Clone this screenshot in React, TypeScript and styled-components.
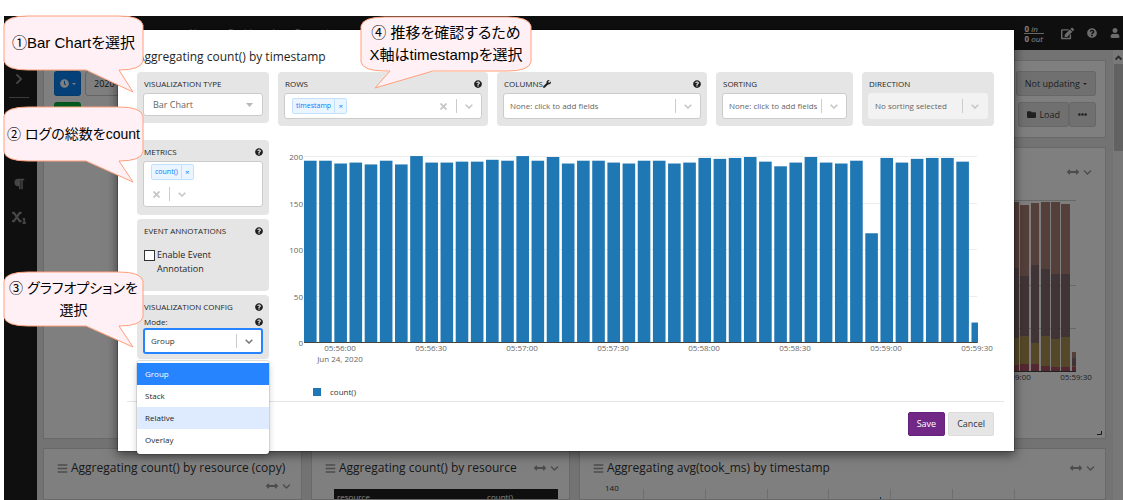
import React from "react";
import styled, { createGlobalStyle, css } from "styled-components";
import {
  FaArrowsAltH,
  FaBars,
  FaChevronDown,
  FaChevronRight,
  FaClock,
  FaEdit,
  FaEllipsisH,
  FaFolder,
  FaParagraph,
  FaPlay,
  FaQuestionCircle,
  FaSubscript,
  FaUser,
  FaWrench,
} from "react-icons/fa";

const Global = createGlobalStyle`
  * { box-sizing: border-box; }
  body {
    margin: 0;
    background: #fff;
    font-family: "Open Sans", "Noto Sans", sans-serif;
    font-size: 8px;
    line-height: 12px;
    color: #1f1f1f;
  }
  button, input, select { font: inherit; color: inherit; margin: 0; }
  button { cursor: pointer; }
  h2, h3 { margin: 0; font-weight: 400; }
  ul { margin: 0; padding: 0; list-style: none; }
  svg { flex: none; }
`;

/* ---------- application behind the dialog ---------- */

const Page = styled.div`
  position: relative;
  padding: 16px 0 0 4px;
`;

const Frame = styled.div`
  position: relative;
  display: flex;
  flex-direction: column;
  height: calc(100vh - 16px);
  overflow: hidden;
  background: #e6e6e6;
`;

const Navbar = styled.nav`
  display: flex;
  flex: none;
  align-items: center;
  height: 34px;
  padding: 0 3px 0 184px;
  background: #1f1f1f;
  color: #e0e0e0;
`;

const NavLinks = styled.div`
  display: flex;
  flex: 1;
  gap: 16px;
  font-size: 9px;
  a { color: inherit; text-decoration: none; }
`;

const NavTools = styled.div`
  display: flex;
  align-items: center;
  gap: 13px;
  color: #d8d8d8;
`;

const Throughput = styled.div`
  margin-right: 4px;
  font-size: 8px;
  line-height: 9px;
  color: #fff;
  span { display: block; padding: 0 1px; }
  span + span { border-top: 1px solid #d0d0d0; }
`;

const IconButton = styled.button`
  display: flex;
  align-items: center;
  padding: 0;
  border: 0;
  background: none;
  color: inherit;
`;

const Main = styled.div`
  display: flex;
  flex: 1;
  min-height: 0;
`;

const Sidebar = styled.aside`
  display: flex;
  flex: none;
  flex-direction: column;
  align-items: center;
  gap: 20px;
  width: 33px;
  padding: 23px 3px 0 0;
  background: #1f1f1f;
  color: #8c8c8c;
  hr { width: 20px; margin: -8px 0 60px; border: 0; border-top: 1px solid #777; }
`;

const Content = styled.main`
  display: flex;
  flex: 1;
  flex-direction: column;
  gap: 9px;
  min-width: 0;
  padding: 10px 7px 0 6px;
`;

const Card = styled.section`
  border: 1px solid #d2d2d2;
  background: #fff;
  min-width: 0;
`;

const SearchBar = styled(Card)`
  display: flex;
  flex: none;
  flex-direction: column;
  gap: 6px;
  padding: 10px 9px 10px 10px;
`;

const SearchRow = styled.div`
  display: flex;
  align-items: center;
  justify-content: space-between;
  height: 25px;
  font-size: 9px;
`;

const Cluster = styled.div<{ $gap?: number }>`
  display: flex;
  gap: ${(p) => p.$gap ?? 0}px;
`;

const ToolButton = styled.button<{ $bg: string; $fg?: string }>`
  display: flex;
  align-items: center;
  justify-content: center;
  gap: 3px;
  min-width: 27px;
  height: 25px;
  padding: 0 ${(p) => (p.$fg ? 4 : 8)}px;
  border: 1px solid rgba(0, 0, 0, 0.08);
  border-radius: 3px;
  background: ${(p) => p.$bg};
  color: ${(p) => p.$fg ?? "#404040"};
`;

const DateField = styled.input`
  width: 180px;
  height: 25px;
  padding: 0 8px;
  border: 1px solid #c8c8c8;
  border-radius: 3px;
  font-size: 9px;
`;

const Caret = styled.i`
  border: 2px solid transparent;
  border-top-color: currentColor;
  border-bottom: 0;
`;

const WideRow = styled.div`
  display: grid;
  flex: none;
  grid-template-columns: 1fr 1fr;
  gap: 9px;
`;

const WideCard = styled(Card)`
  display: flex;
  flex-direction: column;
  align-items: flex-end;
  height: 292px;
  padding: 18px 3px 3px 0;
  > :last-child { margin-top: auto; }
`;

const WidgetTools = styled.div<{ $inset?: number }>`
  display: flex;
  align-items: center;
  gap: 4px;
  padding-right: ${(p) => p.$inset ?? 10}px;
  color: #999;
`;

const WidgetRow = styled.div`
  display: grid;
  flex: 1;
  grid-template-columns: 259fr 259fr 527fr;
  gap: 9px;
  min-height: 0;
`;

const Widget = styled(Card)`
  padding-top: 10px;
  overflow: hidden;
`;

const WidgetHead = styled.header<{ $wrap?: boolean }>`
  display: flex;
  flex-wrap: ${(p) => (p.$wrap ? "wrap" : "nowrap")};
  align-items: center;
  gap: 3px;
  padding-left: 13px;
  color: #999;
  h3 {
    flex: ${(p) => (p.$wrap ? "1 0 80%" : "1")};
    font-size: 12px;
    line-height: 18px;
    color: #333;
    white-space: nowrap;
  }
  ${WidgetTools} { margin-left: auto; }
`;

const DataTable = styled.table`
  width: 224px;
  margin: 12px 0 0 22px;
  border-collapse: collapse;
  background: #1f1f1f;
  color: #fff;
  font-size: 8px;
  line-height: 9px;
  th { width: 67%; padding: 3px; font-weight: 400; text-align: left; }
`;

const Scrollbar = styled.div`
  flex: none;
  width: 10px;
  background: #f0f0f0;
  color: #505050;
  &::after { content: ""; display: block; height: 87px; margin-left: 1px; background: #c4c4c4; }
  svg { display: block; margin: 0 auto; }
`;

/* ---------- dialog ---------- */

const Overlay = styled.div`
  position: absolute;
  inset: 0;
  padding: 13px 108px 0 113px;
  background: rgba(0, 0, 0, 0.5);
`;

const Dialog = styled.div`
  display: flex;
  flex-direction: column;
  border: 1px solid rgba(0, 0, 0, 0.2);
  background: #fff;
  background-clip: padding-box;
  box-shadow: 0 3px 10px rgba(0, 0, 0, 0.5);
`;

const DialogBody = styled.div`
  padding: 18px 20px 0 19px;
  h2 { font-size: 12px; line-height: 18px; }
`;

const FieldRow = styled.div`
  display: grid;
  grid-template-columns: 132fr 210fr 210fr 137fr 132fr;
  align-items: start;
  gap: 9px;
  margin-top: 6px;
`;

const Panel = styled.section<{ $height?: number }>`
  min-width: 0;
  min-height: ${(p) => p.$height ?? 0}px;
  padding: 6px 6px 7px;
  border-radius: 4px;
  background: #e5e5e5;
`;

const PanelHead = styled.div`
  display: flex;
  align-items: center;
  height: 12px;
  margin-bottom: 3px;
  padding-left: 1px;
  white-space: nowrap;
  > :last-child:not(:first-child) { margin-left: auto; }
`;

const control = css`
  display: flex;
  align-items: center;
  width: 100%;
  border: 1px solid #ccc;
  border-radius: 3px;
  background: #fff;
`;

const SelectBox = styled.div<{ $height?: number; $disabled?: boolean; $focus?: boolean }>`
  ${control}
  height: ${(p) => p.$height ?? 26}px;
  color: #666;
  ${(p) => p.$disabled && css`background: #f2f2f2; border-color: #f2f2f2;`}
  ${(p) => p.$focus && css`border: 2px solid #2684ff; color: #333;`}
`;

const Select = styled.select<{ $native?: boolean }>`
  flex: 1;
  align-self: stretch;
  min-width: 0;
  padding: 0 0 0 ${(p) => (p.$native ? 9 : 6)}px;
  border: 0;
  outline: 0;
  appearance: none;
  background: none;
  font-size: ${(p) => (p.$native ? 9 : 8)}px;
  opacity: 1;
`;

const Indicator = styled.button<{ $fg?: string; $bare?: boolean }>`
  display: flex;
  align-items: center;
  justify-content: center;
  width: 25px;
  height: 14px;
  padding: 0;
  border: 0;
  border-left: ${(p) => (p.$bare ? 0 : 1)}px solid #ccc;
  background: none;
  color: ${(p) => p.$fg ?? "#c4c4c4"};
`;

const Tag = styled.span`
  display: flex;
  height: 16px;
  margin: 0 auto 0 7px;
  border: 1px solid #c2e0ff;
  border-radius: 2px;
  background: #ebf5ff;
  color: #007eff;
  font-size: 7px;
  line-height: 14px;
  span { padding: 0 3px; }
  button {
    width: 12px;
    padding: 0;
    border: 0;
    border-left: 1px solid #c2e0ff;
    background: none;
    font-size: 8px;
    line-height: 12px;
  }
`;

const TagArea = styled.div<{ $wrap?: boolean }>`
  ${control}
  flex-wrap: ${(p) => (p.$wrap ? "wrap" : "nowrap")};
  min-height: 26px;
  padding: ${(p) => (p.$wrap ? "2px 0 5px" : "0")};
`;

const Break = styled.i`
  flex-basis: 100%;
  height: 7px;
`;

const Columns = styled.div`
  display: grid;
  grid-template-columns: 132fr 716fr;
  gap: 9px;
  margin-top: 14px;
`;

const Side = styled.div`
  display: flex;
  flex-direction: column;
  gap: 4px;
`;

const Check = styled.label`
  display: flex;
  align-items: flex-start;
  gap: 2px;
  margin-top: 11px;
  padding: 0 40px 0 1px;
  font-size: 9px;
  line-height: 14px;
  input {
    flex: none;
    width: 11px;
    height: 11px;
    margin-top: 2px;
    appearance: none;
    border: 1px solid #333;
    background: #fff;
  }
`;

const ConfigPanel = styled(Panel)`
  position: relative;
  padding-bottom: 5px;
  ${PanelHead} + ${PanelHead} { margin-bottom: 0; }
`;

const Menu = styled.ul`
  position: absolute;
  top: 100%;
  left: 0;
  right: 0;
  z-index: 1;
  margin-top: 2px;
  padding: 2px 0 3px;
  border-radius: 3px;
  background: #fff;
  box-shadow: 0 0 0 1px rgba(0, 0, 0, 0.1), 0 3px 7px rgba(0, 0, 0, 0.2);
`;

const Option = styled.li<{ $state?: "selected" | "hover" }>`
  padding: 0 8px;
  line-height: 22px;
  ${(p) => p.$state === "selected" && css`background: #2684ff; color: #fff;`}
  ${(p) => p.$state === "hover" && css`background: #deebff;`}
`;

const Chart = styled.svg`
  display: block;
  width: 100%;
  overflow: visible;
  font-size: 8px;
  fill: #666;
`;

const DialogFooter = styled.footer`
  display: flex;
  justify-content: flex-end;
  gap: 3px;
  height: 50px;
  margin: 0 10px 0 9px;
  padding: 10px;
  border-top: 1px solid #e5e5e5;
`;

const FooterButton = styled.button<{ $primary?: boolean }>`
  height: 24px;
  padding: 0 8px;
  border: 1px solid ${(p) => (p.$primary ? "#64237a" : "#dcdcdc")};
  border-radius: 2px;
  background: ${(p) => (p.$primary ? "#702785" : "#e5e5e5")};
  color: ${(p) => (p.$primary ? "#fff" : "#333")};
  font-size: 9px;
`;

/* ---------- instruction balloons ---------- */

const Balloon = styled.div<{ $x: number; $y: number; $w: number; $size: number }>`
  position: absolute;
  left: ${(p) => p.$x}px;
  top: ${(p) => p.$y}px;
  display: flex;
  align-items: center;
  justify-content: center;
  width: ${(p) => p.$w}px;
  height: 56px;
  font-family: "Liberation Sans", "Noto Sans CJK JP", sans-serif;
  font-size: ${(p) => p.$size}px;
  line-height: 22px;
  font-feature-settings: "palt";
  text-align: center;
  white-space: nowrap;
  color: #000;
  > svg { position: absolute; left: 0; top: 0; overflow: visible; }
  span { position: relative; }
`;

function Callout(props: {
  x: number;
  y: number;
  w: number;
  size: number;
  tail: [number, number, number, number];
  children: React.ReactNode;
}) {
  const { x, y, w, size, tail } = props;
  const [from, tipX, tipY, to] = tail;
  const d = `M0 10 Q2 1 24 1 H${w - 24} Q${w - 2} 1 ${w} 10 V46 Q${w - 2} 55 ${w - 24} 55 H${to} L${tipX} ${tipY} L${from} 55 H24 Q2 55 0 46 Z`;
  return (
    <Balloon $x={x} $y={y} $w={w} $size={size}>
      <svg width={w} height="80" fill="#fff0f5" stroke="#ffa07a" aria-hidden="true">
        <path d={d} />
      </svg>
      <span>{props.children}</span>
    </Balloon>
  );
}

/* ---------- shared pieces ---------- */

const Chevron = () => (
  <svg width="8" height="5" viewBox="0 0 8 5" fill="none" stroke="currentColor" strokeWidth="1.5">
    <path d="M0.7 0.7 L4 4 L7.3 0.7" />
  </svg>
);

const Cross = () => (
  <svg width="7" height="7" viewBox="0 0 7 7" stroke="currentColor" strokeWidth="1.6">
    <path d="M0.5 0.5 L6.5 6.5 M6.5 0.5 L0.5 6.5" />
  </svg>
);

const Help = () => (
  <IconButton aria-label="Help">
    <FaQuestionCircle size={8} />
  </IconButton>
);

function SelectField(props: {
  id: string;
  value: string;
  height?: number;
  disabled?: boolean;
  focus?: boolean;
  native?: boolean;
}) {
  return (
    <SelectBox $height={props.height} $disabled={props.disabled} $focus={props.focus}>
      <Select id={props.id} $native={props.native} disabled={props.disabled}>
        <option>{props.value}</option>
      </Select>
      <Indicator $bare={props.native} $fg={props.focus ? "#777" : undefined} aria-label="Open" disabled={props.disabled}>
        {props.native ? (
          <svg width="7" height="4">
            <path d="M0 0 H7 L3.5 4 Z" fill="#b8b8b8" />
          </svg>
        ) : (
          <Chevron />
        )}
      </Indicator>
    </SelectBox>
  );
}

const TagItem = ({ label }: { label: string }) => (
  <Tag>
    <span>{label}</span>
    <button aria-label={`Remove ${label}`}>×</button>
  </Tag>
);

const Tools = () => (
  <WidgetTools>
    <FaArrowsAltH size={12} />
    <FaChevronDown size={9} />
  </WidgetTools>
);

/* ---------- charts ---------- */

const counts = [
  196, 196, 193, 194, 192, 196, 192, 201, 194, 194, 195, 195, 197, 196, 201, 196, 200, 193, 196, 196, 194, 193, 196,
  196, 193, 194, 199, 198, 199, 200, 195, 190, 194, 200, 194, 193, 196, 118, 199, 194, 198, 199, 199, 195, 22,
];
const times = ["05:56:00", "05:56:30", "05:57:00", "05:57:30", "05:58:00", "05:58:30", "05:59:00", "05:59:30"];

function CountChart() {
  const base = 203;
  const unit = 0.93;
  return (
    <Chart viewBox="0 0 716 261" role="img" aria-label="count() by timestamp">
      {[200, 150, 100, 50, 0].map((v) => (
        <g key={v}>
          <path d={`M26 ${Math.round(base - v * unit) - 0.5} H699`} stroke="#ececec" />
          <text x="25" y={Math.round(base - v * unit) + 3} textAnchor="end">{v}</text>
        </g>
      ))}
      {counts.map((v, i) => (
        <rect key={i} x={26 + i * 15.17} y={base - v * unit} width={i === 44 ? 6.5 : 12.6} height={v * unit} fill="#1f77b4" />
      ))}
      <path d="M26 202.5 H699" stroke="#444" />
      {times.map((t, i) => (
        <text key={t} x={62 + i * 91} y="211" textAnchor="middle">{t}</text>
      ))}
      <text x="62" y="222" textAnchor="middle">Jun 24, 2020</text>
      <rect x="35" y="248" width="8" height="8" fill="#1f77b4" />
      <text x="52" y="255" fill="#333">count()</text>
    </Chart>
  );
}

const stacks = [
  { x: 28, w: 9, top: 4, mid: 70, low: 140, red: 167 },
  { x: 38, w: 9, top: 7, mid: 78, low: 138, red: 166 },
  { x: 49, w: 8, top: 5, mid: 67, low: 145, red: 166 },
  { x: 59, w: 9, top: 4, mid: 71, low: 138, red: 168 },
  { x: 69, w: 9, top: 4, mid: 76, low: 141, red: 169 },
  { x: 79, w: 9, top: 6, mid: 76, low: 139, red: 169 },
  { x: 90, w: 4, top: 154, mid: 160, low: 168, red: 169 },
];

function StackedChart() {
  return (
    <svg width="120" height="210" viewBox="0 -20 120 210" fontSize="8" role="img" aria-label="Stacked counts">
      {[3, 88, 131].map((y) => (
        <path key={y} d={`M0 ${y - 0.5} H94`} stroke="#d0d0d0" />
      ))}
      {stacks.map((s) => (
        <g key={s.x}>
          <rect x={s.x} y={s.top} width={s.w} height={s.mid - s.top} fill="#a97e75" />
          <rect x={s.x} y={s.mid} width={s.w} height={s.low - s.mid} fill="#82686f" />
          <rect x={s.x} y={s.low} width={s.w} height={s.red - s.low} fill="#aa9050" />
          <rect x={s.x} y={s.red} width={s.w} height={173 - s.red} fill="#a85060" />
        </g>
      ))}
      <path d="M0 173.5 H94" stroke="#444" />
      <text x="33" y="182" textAnchor="middle" fill="#444">05:59:00</text>
      <text x="94" y="182" textAnchor="middle" fill="#444">05:59:30</text>
    </svg>
  );
}

export default function App() {
  return (
    <Page>
      <Global />
      <Frame>
        <Navbar>
          <NavLinks>
            <a href="#alerts">Alerts</a>
            <a href="#dashboards">Dashboards</a>
            <a href="#enterprise">Enterprise</a>
          </NavLinks>
          <NavTools>
            <Throughput>
              <span><b>0</b> <i>in</i></span>
              <span><b>0</b> <i>out</i></span>
            </Throughput>
            <FaEdit size={13} />
            <FaQuestionCircle size={10} />
            <FaUser size={10} />
          </NavTools>
        </Navbar>
        <Main>
          <Sidebar>
            <FaChevronRight size={12} />
            <hr />
            <FaParagraph size={12} />
            <FaSubscript size={14} />
          </Sidebar>
          <Content>
            <SearchBar>
              <SearchRow>
                <Cluster $gap={4}>
                  <ToolButton $bg="#0a80f0" $fg="#fff" aria-label="Time range"><FaClock size={9} /><Caret /></ToolButton>
                  <DateField aria-label="From" defaultValue="2020-06-24" />
                </Cluster>
                <ToolButton $bg="#e0e0e0">Not updating <Caret /></ToolButton>
              </SearchRow>
              <SearchRow>
                <ToolButton $bg="#00b440" $fg="#fff" aria-label="Search"><FaPlay size={8} /></ToolButton>
                <Cluster>
                  <ToolButton $bg="#e0e0e0"><FaFolder size={9} />Load</ToolButton>
                  <ToolButton $bg="#e0e0e0" aria-label="More"><FaEllipsisH size={9} /></ToolButton>
                </Cluster>
              </SearchRow>
            </SearchBar>
            <WideRow>
              <WideCard />
              <WideCard>
                <Tools />
                <StackedChart />
                <svg width="5" height="5"><path d="M4.5 1 V4.5 H0" fill="none" stroke="#333" /></svg>
              </WideCard>
            </WideRow>
            <WidgetRow>
              <Widget>
                <WidgetHead $wrap>
                  <FaBars size={11} />
                  <h3>Aggregating count() by resource (copy)</h3>
                  <Tools />
                </WidgetHead>
              </Widget>
              <Widget>
                <WidgetHead>
                  <FaBars size={11} />
                  <h3>Aggregating count() by resource</h3>
                  <Tools />
                </WidgetHead>
                <DataTable>
                  <thead>
                    <tr><th>resource</th><th>count()</th></tr>
                  </thead>
                </DataTable>
              </Widget>
              <Widget>
                <WidgetHead>
                  <FaBars size={11} />
                  <h3>Aggregating avg(took_ms) by timestamp</h3>
                  <Tools />
                </WidgetHead>
                <svg width="500" height="40" viewBox="0 0 500 40" fontSize="8" role="img" aria-label="Average took_ms">
                  <text x="25" y="14" fill="#333">140</text>
                  {[0, 1, 2, 3, 4, 5, 6].map((i) => (
                    <path key={i} d={`M${Math.round(64 + i * 61.8) - 0.5} 12 V40`} stroke="#dedede" />
                  ))}
                  <path d="M299 40 L300.5 20 L302 40" fill="none" stroke="#1f77b4" />
                </svg>
              </Widget>
            </WidgetRow>
          </Content>
          <Scrollbar aria-hidden="true">
            <svg width="7" height="14" viewBox="0 0 7 14" fill="none" stroke="currentColor" strokeWidth="1.8">
              <path d="M0.5 9.5 L3.5 6.5 L6.5 9.5" />
            </svg>
          </Scrollbar>
        </Main>

        <Overlay>
          <Dialog role="dialog" aria-labelledby="dialog-title">
            <DialogBody>
              <h2 id="dialog-title">Aggregating count() by timestamp</h2>
              <FieldRow>
                <Panel>
                  <PanelHead><label htmlFor="type">VISUALIZATION TYPE</label></PanelHead>
                  <SelectField id="type" value="Bar Chart" height={23} native />
                </Panel>
                <Panel>
                  <PanelHead><span>ROWS</span><Help /></PanelHead>
                  <TagArea>
                    <TagItem label="timestamp" />
                    <Indicator $bare aria-label="Clear rows"><Cross /></Indicator>
                    <Indicator aria-label="Open rows"><Chevron /></Indicator>
                  </TagArea>
                </Panel>
                <Panel>
                  <PanelHead><label htmlFor="columns">COLUMNS</label><FaWrench size={8} /><Help /></PanelHead>
                  <SelectField id="columns" value="None: click to add fields" />
                </Panel>
                <Panel>
                  <PanelHead><label htmlFor="sorting">SORTING</label></PanelHead>
                  <SelectField id="sorting" value="None: click to add fields" />
                </Panel>
                <Panel>
                  <PanelHead><label htmlFor="direction">DIRECTION</label></PanelHead>
                  <SelectField id="direction" value="No sorting selected" disabled />
                </Panel>
              </FieldRow>
              <Columns>
                <Side>
                  <Panel $height={75}>
                    <PanelHead><span>METRICS</span><Help /></PanelHead>
                    <TagArea $wrap>
                      <TagItem label="count()" />
                      <Break />
                      <Indicator $bare aria-label="Clear metrics"><Cross /></Indicator>
                      <Indicator aria-label="Open metrics"><Chevron /></Indicator>
                    </TagArea>
                  </Panel>
                  <Panel $height={72}>
                    <PanelHead><span>EVENT ANNOTATIONS</span><Help /></PanelHead>
                    <Check><input type="checkbox" />Enable Event Annotation</Check>
                  </Panel>
                  <ConfigPanel>
                    <PanelHead><span>VISUALIZATION CONFIG</span><Help /></PanelHead>
                    <PanelHead><label htmlFor="mode">Mode:</label><Help /></PanelHead>
                    <SelectField id="mode" value="Group" focus />
                    <Menu role="listbox" aria-label="Mode">
                      <Option role="option" aria-selected="true" $state="selected">Group</Option>
                      <Option role="option">Stack</Option>
                      <Option role="option" $state="hover">Relative</Option>
                      <Option role="option">Overlay</Option>
                    </Menu>
                  </ConfigPanel>
                </Side>
                <CountChart />
              </Columns>
            </DialogBody>
            <DialogFooter>
              <FooterButton $primary>Save</FooterButton>
              <FooterButton>Cancel</FooterButton>
            </DialogFooter>
          </Dialog>
        </Overlay>
      </Frame>

      <Callout x={4} y={15} w={139} size={15} tail={[82, 129, 77, 115]}>①Bar Chartを選択</Callout>
      <Callout x={4} y={106} w={139} size={14} tail={[82, 129, 76, 115]}>② ログの総数をcount</Callout>
      <Callout x={4} y={271} w={139} size={14} tail={[82, 129, 76, 115]}>③ グラフオプションを<br />選択</Callout>
      <Callout x={361} y={16} w={170} size={15} tail={[29, 14, 72, 72]}>④ 推移を確認するため<br />X軸はtimestampを選択</Callout>
    </Page>
  );
}
